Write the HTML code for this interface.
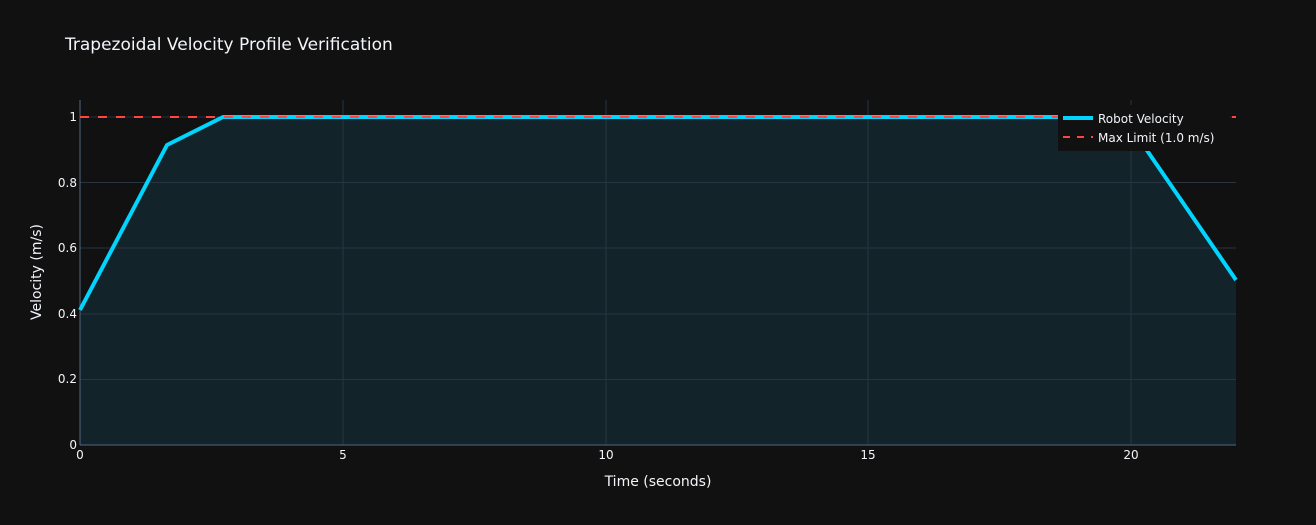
<!DOCTYPE html>
<html><head><style>
body{margin:0;background:#111111;width:1316px;height:525px;overflow:hidden;font-family:"DejaVu Sans",sans-serif;}
</style></head><body>
<svg width="1316" height="525" xmlns="http://www.w3.org/2000/svg" style="display:block" font-family="DejaVu Sans, sans-serif">
<rect width="1316" height="525" fill="#111111"/>
<text x="65" y="50" fill="#f2f5fa" font-size="17">Trapezoidal Velocity Profile Verification</text>
<polygon points="80,310 167,145 223,117 1124,117 1236,280 1236,445 80,445" fill="#12232a"/>
<g stroke="#283442" stroke-width="1">
<line x1="343" y1="100" x2="343" y2="445"/><line x1="606" y1="100" x2="606" y2="445"/>
<line x1="868" y1="100" x2="868" y2="445"/><line x1="1131" y1="100" x2="1131" y2="445"/>
<line x1="80" y1="117" x2="1236" y2="117"/><line x1="80" y1="182.5" x2="1236" y2="182.5"/>
<line x1="80" y1="248" x2="1236" y2="248"/><line x1="80" y1="314" x2="1236" y2="314"/>
<line x1="80" y1="379.5" x2="1236" y2="379.5"/>
</g>
<line x1="80" y1="100" x2="80" y2="445" stroke="#506784" stroke-width="1"/>
<line x1="80" y1="445" x2="1236" y2="445" stroke="#506784" stroke-width="1"/>
<polyline points="80,310 167,145 223,117 1124,117 1236,280" fill="none" stroke="#00d4ff" stroke-width="4" stroke-linejoin="round"/>
<line x1="80" y1="117" x2="1236" y2="117" stroke="#ff4444" stroke-width="2" stroke-dasharray="9,9"/>
<g fill="#f2f5fa" font-size="12" text-anchor="end">
<text x="77" y="121">1</text><text x="77" y="187">0.8</text><text x="77" y="252">0.6</text>
<text x="77" y="318">0.4</text><text x="77" y="383">0.2</text><text x="77" y="449">0</text>
</g>
<g fill="#f2f5fa" font-size="12" text-anchor="middle">
<text x="80" y="459">0</text><text x="343" y="459">5</text><text x="606" y="459">10</text>
<text x="868" y="459">15</text><text x="1131" y="459">20</text>
</g>
<text x="658" y="486" fill="#f2f5fa" font-size="14" text-anchor="middle">Time (seconds)</text>
<text transform="translate(41,272) rotate(-90)" fill="#f2f5fa" font-size="14" text-anchor="middle">Velocity (m/s)</text>
<rect x="1058" y="105" width="172" height="46" fill="#111111"/>
<line x1="1063" y1="118" x2="1093" y2="118" stroke="#00d4ff" stroke-width="4"/>
<line x1="1063" y1="137" x2="1093" y2="137" stroke="#ff4444" stroke-width="2" stroke-dasharray="7,7"/>
<text x="1098" y="123" fill="#f2f5fa" font-size="12">Robot Velocity</text>
<text x="1098" y="142" fill="#f2f5fa" font-size="12">Max Limit (1.0 m/s)</text>
</svg>
</body></html>
